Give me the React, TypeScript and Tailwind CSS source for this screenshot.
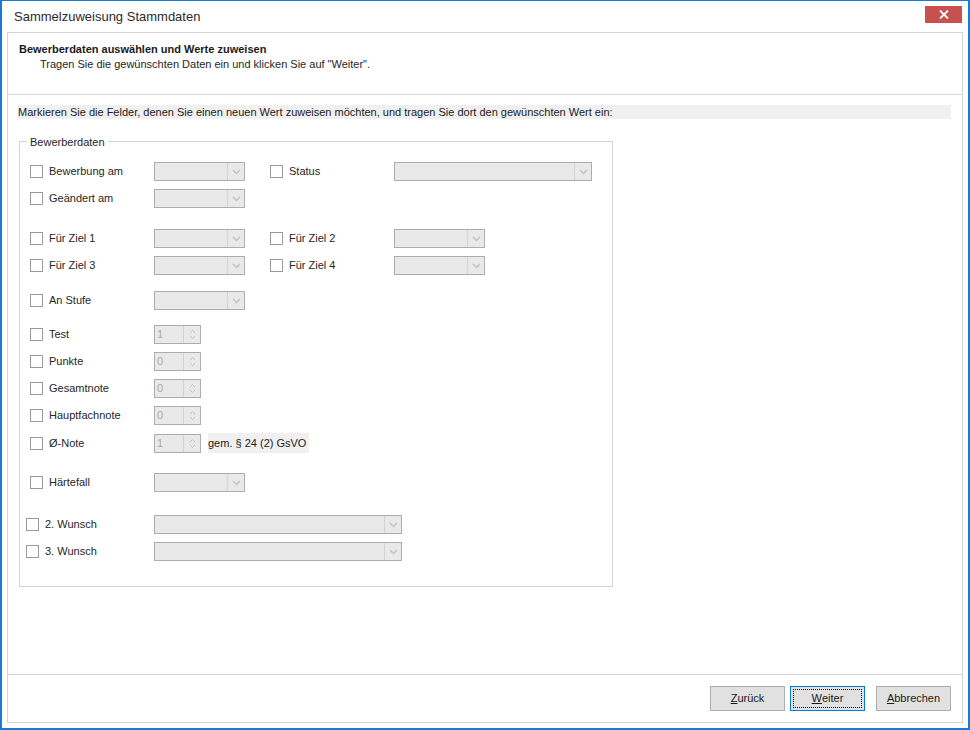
import React from "react";

const font = { fontFamily: '"Liberation Sans", Arial, sans-serif' };

const Chevron = () => (
  <svg width="9" height="6" viewBox="0 0 9 6" className="block">
    <path d="M1 1l3.5 3.5L8 1" fill="none" stroke="#c2c2c2" strokeWidth={1.4} />
  </svg>
);

const Combo = ({ w }: { w: string }) => (
  <div className={`flex h-[19px] ${w} border border-[#adadad] bg-[#e9e9e9]`}>
    <div className="flex-1" />
    <div className="flex w-[17px] items-center justify-center border-l border-[#d3d3d3]">
      <Chevron />
    </div>
  </div>
);

const Spin = ({ value }: { value: string }) => (
  <div className="flex h-[19px] w-[47px] border border-[#adadad] bg-[#e9e9e9]">
    <div className="flex flex-1 items-center pl-[2px] text-[11px] text-[#a8a8a8]">{value}</div>
    <div className="flex w-[17px] flex-col items-center justify-center gap-[1px] border-l border-[#d3d3d3]">
      <svg width="7" height="5" viewBox="0 0 7 5" className="block">
        <path d="M1 4l2.5-2.5L6 4" fill="none" stroke="#c2c2c2" strokeWidth={1} />
      </svg>
      <svg width="7" height="5" viewBox="0 0 7 5" className="block">
        <path d="M1 1l2.5 2.5L6 1" fill="none" stroke="#c2c2c2" strokeWidth={1} />
      </svg>
    </div>
  </div>
);

const Check = () => <div className="h-[13px] w-[13px] shrink-0 border border-[#9a9a9a] bg-white" />;

const Field = ({ label, children }: { label: string; children?: React.ReactNode }) => (
  <div className="flex items-center">
    <Check />
    <span className="ml-[6px] w-[105px] text-[11px] text-[#262626]">{label}</span>
    {children}
  </div>
);

const Btn = ({ acc, rest, primary }: { acc: string; rest: string; primary?: boolean }) => (
  <button
    className={`flex h-[25px] w-[75px] items-center justify-center bg-[#e1e1e1] text-[11px] text-[#1a1a1a] ${
      primary ? "border border-[#0078d7] p-[2px]" : "border border-[#adadad]"
    }`}
  >
    {primary ? (
      <span className="flex h-full w-full items-center justify-center border border-dotted border-black">
        <span className="underline">{acc}</span>
        {rest}
      </span>
    ) : (
      <>
        <span className="underline">{acc}</span>
        {rest}
      </>
    )}
  </button>
);

export default function App() {
  return (
    <div
      className="flex h-[730px] w-[970px] flex-col border-x-2 border-b-2 border-t border-[#1c7bd0] bg-white"
      style={font}
    >
      {/* Title bar */}
      <div className="flex h-[31px] shrink-0 items-center justify-between pl-[12px] pr-[6px]">
        <span className="text-[13px] text-[#2b2b2b]">Sammelzuweisung Stammdaten</span>
        <div className="mt-[-4px] flex h-[17px] w-[37px] items-center justify-center bg-[#c75050]">
          <svg width="10" height="9" viewBox="0 0 10 9">
            <path d="M1 0.5l8 8M9 0.5l-8 8" stroke="#fff" strokeWidth={1.8} />
          </svg>
        </div>
      </div>

      {/* Inner panel */}
      <div className="mx-[5px] mb-[5px] flex flex-1 flex-col border border-[#d5d5d5]">
        {/* Header */}
        <div className="h-[62px] shrink-0 border-b border-[#d9d9d9] pl-[11px] pt-[9px]">
          <div className="text-[11px] leading-[15px] font-bold text-[#1a1a1a]">
            Bewerberdaten auswählen und Werte zuweisen
          </div>
          <div className="pl-[21px] text-[11px] leading-[15px] text-[#262626]">
            Tragen Sie die gewünschten Daten ein und klicken Sie auf "Weiter".
          </div>
        </div>

        {/* Content */}
        <div className="flex-1 pl-[10px] pr-[11px] pt-[10px]">
          <div className="flex h-[14px] items-center bg-[#f0f0f0] text-[11px] text-[#1a1a1a]">
            Markieren Sie die Felder, denen Sie einen neuen Wert zuweisen möchten, und tragen Sie dort den gewünschten Wert ein:
          </div>

          {/* Group box */}
          <div className="relative ml-[1px] mt-[22px] flex h-[446px] w-[594px] flex-col border border-[#d5d5d5] pb-[26px] pl-[10px] pt-[20px]">
            <span className="absolute left-[7px] top-[-8px] bg-white px-[3px] text-[11px] text-[#262626]">
              Bewerberdaten
            </span>

            <div className="flex items-center">
              <Field label="Bewerbung am">
                <Combo w="w-[91px]" />
              </Field>
              <div className="ml-[25px]">
                <Field label="Status">
                  <Combo w="w-[198px]" />
                </Field>
              </div>
            </div>
            <div className="mt-[8px]">
              <Field label="Geändert am">
                <Combo w="w-[91px]" />
              </Field>
            </div>

            <div className="mt-[21px] flex items-center">
              <Field label="Für Ziel 1">
                <Combo w="w-[91px]" />
              </Field>
              <div className="ml-[25px]">
                <Field label="Für Ziel 2">
                  <Combo w="w-[91px]" />
                </Field>
              </div>
            </div>
            <div className="mt-[8px] flex items-center">
              <Field label="Für Ziel 3">
                <Combo w="w-[91px]" />
              </Field>
              <div className="ml-[25px]">
                <Field label="Für Ziel 4">
                  <Combo w="w-[91px]" />
                </Field>
              </div>
            </div>

            <div className="mt-[16px]">
              <Field label="An Stufe">
                <Combo w="w-[91px]" />
              </Field>
            </div>

            <div className="mt-[15px]">
              <Field label="Test">
                <Spin value="1" />
              </Field>
            </div>
            <div className="mt-[8px]">
              <Field label="Punkte">
                <Spin value="0" />
              </Field>
            </div>
            <div className="mt-[8px]">
              <Field label="Gesamtnote">
                <Spin value="0" />
              </Field>
            </div>
            <div className="mt-[8px]">
              <Field label="Hauptfachnote">
                <Spin value="0" />
              </Field>
            </div>
            <div className="mt-[8px]">
              <Field label="Ø-Note">
                <Spin value="1" />
                <span className="ml-[7px] flex h-[20px] w-[101px] items-center bg-[#f0f0f0] text-[11px] text-[#1a1a1a]">
                  gem. § 24 (2) GsVO
                </span>
              </Field>
            </div>

            <div className="mt-[20px]">
              <Field label="Härtefall">
                <Combo w="w-[91px]" />
              </Field>
            </div>

            <div className="ml-[-4px] mt-[23px] flex items-center">
              <Check />
              <span className="ml-[6px] w-[109px] text-[11px] text-[#262626]">2. Wunsch</span>
              <Combo w="w-[248px]" />
            </div>
            <div className="ml-[-4px] mt-[8px] flex items-center">
              <Check />
              <span className="ml-[6px] w-[109px] text-[11px] text-[#262626]">3. Wunsch</span>
              <Combo w="w-[248px]" />
            </div>
          </div>
        </div>

        {/* Footer */}
        <div className="flex h-[48px] shrink-0 items-center justify-end gap-[5px] border-t border-[#d5d5d5] pr-[11px]">
          <Btn acc="Z" rest="urück" />
          <Btn acc="W" rest="eiter" primary />
          <div className="ml-[6px]">
            <Btn acc="A" rest="bbrechen" />
          </div>
        </div>
      </div>
    </div>
  );
}
